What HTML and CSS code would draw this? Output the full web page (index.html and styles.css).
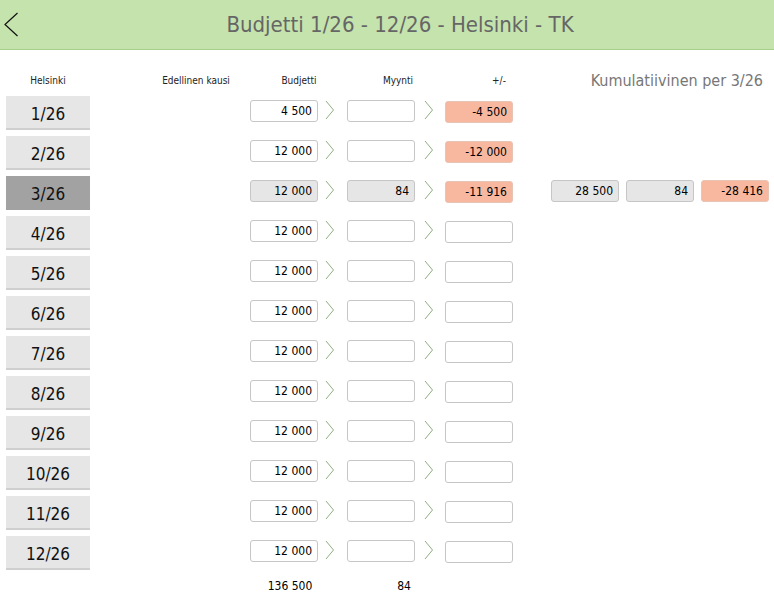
FILE: index.html
```html
<!DOCTYPE html>
<html lang="fi">
<head>
<meta charset="utf-8">
<title>Budjetti</title>
<link rel="stylesheet" href="styles.css">
</head>
<body>
<header class="topbar">
  <svg class="back" width="16" height="26" viewBox="0 0 16 26"><polyline points="13.5,1 1,12.5 13.5,24" fill="none" stroke="#111" stroke-width="1.2"/></svg>
  <h1 class="title">Budjetti 1/26 - 12/26 - Helsinki - TK</h1>
</header>
<main class="sheet">
  <div class="colhead">
    <span class="lbl lbl-city">Helsinki</span>
    <span class="lbl lbl-prev">Edellinen kausi</span>
    <span class="lbl lbl-bud">Budjetti</span>
    <span class="lbl lbl-sale">Myynti</span>
    <span class="lbl lbl-diff">+/-</span>
    <span class="cumtitle">Kumulatiivinen per 3/26</span>
  </div>

  <div class="row"><div class="month">1/26</div><div class="box bud">4 500</div><svg class="chev c1" viewBox="0 0 29 34"><polyline points="8,5 15.5,14 8,23"/></svg><div class="box"></div><svg class="chev c2" viewBox="0 0 30 34"><polyline points="10,5 17.5,14 10,23"/></svg><div class="box diff neg">-4 500</div></div>
  <div class="row"><div class="month">2/26</div><div class="box bud">12 000</div><svg class="chev c1" viewBox="0 0 29 34"><polyline points="8,5 15.5,14 8,23"/></svg><div class="box"></div><svg class="chev c2" viewBox="0 0 30 34"><polyline points="10,5 17.5,14 10,23"/></svg><div class="box diff neg">-12 000</div></div>
  <div class="row"><div class="month active">3/26</div><div class="box bud grey">12 000</div><svg class="chev c1" viewBox="0 0 29 34"><polyline points="8,5 15.5,14 8,23"/></svg><div class="box grey">84</div><svg class="chev c2" viewBox="0 0 30 34"><polyline points="10,5 17.5,14 10,23"/></svg><div class="box diff neg">-11 916</div>
    <div class="cum"><div class="box grey">28 500</div><div class="box grey">84</div><div class="box neg">-28 416</div></div>
  </div>
  <div class="row"><div class="month">4/26</div><div class="box bud">12 000</div><svg class="chev c1" viewBox="0 0 29 34"><polyline points="8,5 15.5,14 8,23"/></svg><div class="box"></div><svg class="chev c2" viewBox="0 0 30 34"><polyline points="10,5 17.5,14 10,23"/></svg><div class="box diff"></div></div>
  <div class="row"><div class="month">5/26</div><div class="box bud">12 000</div><svg class="chev c1" viewBox="0 0 29 34"><polyline points="8,5 15.5,14 8,23"/></svg><div class="box"></div><svg class="chev c2" viewBox="0 0 30 34"><polyline points="10,5 17.5,14 10,23"/></svg><div class="box diff"></div></div>
  <div class="row"><div class="month">6/26</div><div class="box bud">12 000</div><svg class="chev c1" viewBox="0 0 29 34"><polyline points="8,5 15.5,14 8,23"/></svg><div class="box"></div><svg class="chev c2" viewBox="0 0 30 34"><polyline points="10,5 17.5,14 10,23"/></svg><div class="box diff"></div></div>
  <div class="row"><div class="month">7/26</div><div class="box bud">12 000</div><svg class="chev c1" viewBox="0 0 29 34"><polyline points="8,5 15.5,14 8,23"/></svg><div class="box"></div><svg class="chev c2" viewBox="0 0 30 34"><polyline points="10,5 17.5,14 10,23"/></svg><div class="box diff"></div></div>
  <div class="row"><div class="month">8/26</div><div class="box bud">12 000</div><svg class="chev c1" viewBox="0 0 29 34"><polyline points="8,5 15.5,14 8,23"/></svg><div class="box"></div><svg class="chev c2" viewBox="0 0 30 34"><polyline points="10,5 17.5,14 10,23"/></svg><div class="box diff"></div></div>
  <div class="row"><div class="month">9/26</div><div class="box bud">12 000</div><svg class="chev c1" viewBox="0 0 29 34"><polyline points="8,5 15.5,14 8,23"/></svg><div class="box"></div><svg class="chev c2" viewBox="0 0 30 34"><polyline points="10,5 17.5,14 10,23"/></svg><div class="box diff"></div></div>
  <div class="row"><div class="month">10/26</div><div class="box bud">12 000</div><svg class="chev c1" viewBox="0 0 29 34"><polyline points="8,5 15.5,14 8,23"/></svg><div class="box"></div><svg class="chev c2" viewBox="0 0 30 34"><polyline points="10,5 17.5,14 10,23"/></svg><div class="box diff"></div></div>
  <div class="row"><div class="month">11/26</div><div class="box bud">12 000</div><svg class="chev c1" viewBox="0 0 29 34"><polyline points="8,5 15.5,14 8,23"/></svg><div class="box"></div><svg class="chev c2" viewBox="0 0 30 34"><polyline points="10,5 17.5,14 10,23"/></svg><div class="box diff"></div></div>
  <div class="row"><div class="month">12/26</div><div class="box bud">12 000</div><svg class="chev c1" viewBox="0 0 29 34"><polyline points="8,5 15.5,14 8,23"/></svg><div class="box"></div><svg class="chev c2" viewBox="0 0 30 34"><polyline points="10,5 17.5,14 10,23"/></svg><div class="box diff"></div></div>

  <div class="totals">
    <span class="tot tot-bud">136 500</span>
    <span class="tot tot-sale">84</span>
  </div>
</main>
</body>
</html>
```
FILE: styles.css
```css
* { box-sizing: border-box; }
html, body { margin: 0; padding: 0; background: #fff; }
body {
  font-family: "DejaVu Sans Condensed", "DejaVu Sans", "Liberation Sans", sans-serif;
  font-stretch: condensed;
  color: #111;
  width: 774px;
}
.topbar {
  height: 50px;
  background: #c5e3ad;
  border-bottom: 1px solid #a6cf8a;
  display: flex;
  align-items: center;
  position: relative;
}
.back { position: absolute; left: 4px; top: 12px; }
.title {
  margin: 0;
  flex: 1;
  text-align: center;
  padding-left: 26px;
  font-size: 22px;
  font-weight: normal;
  color: #666;
}
.sheet { padding-left: 6px; }
.colhead {
  height: 46px;
  padding-top: 14px;
  display: flex;
  align-items: center;
}
.lbl { font-size: 10px; width: 80px; text-align: center; color: #222; }
.lbl-city { width: 84px; }
.lbl-prev { margin-left: 66px; }
.lbl-bud { margin-left: 23px; }
.lbl-sale { margin-left: 19px; }
.lbl-diff { margin-left: 21px; }
.cumtitle {
  margin-left: auto;
  padding-right: 11px;
  font-size: 16px;
  color: #777;
}
.row {
  display: flex;
  align-items: flex-start;
  height: 34px;
  margin-bottom: 6px;
}
.month {
  width: 84px;
  height: 34px;
  background: #e6e6e6;
  border-bottom: 2px solid #cfcfcf;
  font-size: 17px;
  text-align: center;
  padding-top: 3px;
  line-height: 31px;
  color: #111;
}
.month.active { background: #a2a2a2; border-bottom-color: #a2a2a2; }
.box {
  width: 68px;
  height: 22px;
  margin-top: 4px;
  border: 1px solid #c6c6c6;
  border-radius: 3px;
  background: #fff;
  font-size: 12px;
  line-height: 20px;
  text-align: right;
  padding-right: 5px;
  color: #000;
}
.box.bud { margin-left: 160px; }
.box.diff { margin-top: 5px; }
.box.grey { background: #e6e6e6; }
.box.neg { background: #f8b8a0; border-color: #e8c4b4; }
.chev {
  display: block;
  height: 34px;
  fill: none;
  stroke: #8fae80;
  stroke-width: 1;
}
.chev.c1 { width: 29px; }
.chev.c2 { width: 30px; }
.cum { display: flex; gap: 7px; margin-left: 38px; }
.totals { display: flex; height: 20px; align-items: center; }
.tot { font-size: 12px; width: 80px; text-align: center; color: #000; }
.tot-bud { margin-left: 244px; }
.tot-sale { margin-left: 34px; }
```
